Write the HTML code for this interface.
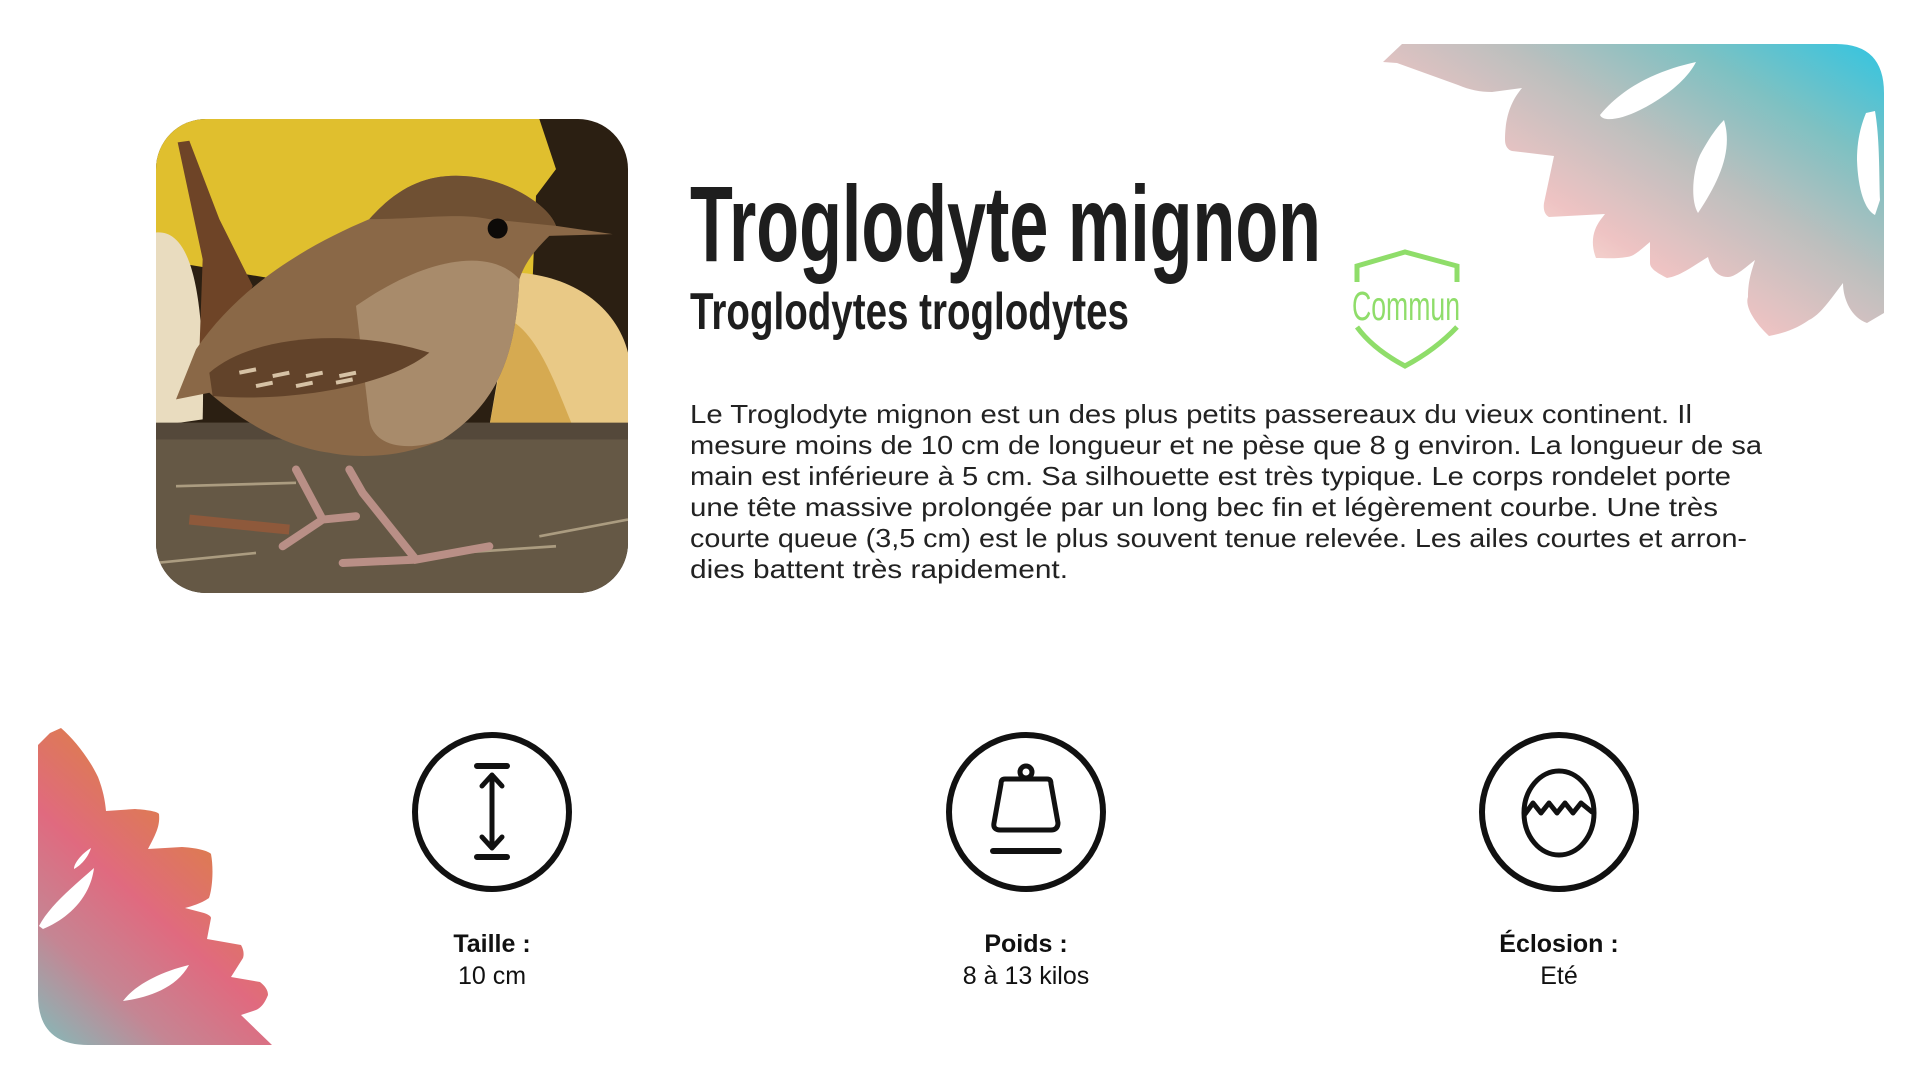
<!DOCTYPE html>
<html><head><meta charset="utf-8"><style>
html,body{margin:0;padding:0;background:#fff;width:1921px;height:1080px;overflow:hidden}
svg{position:absolute;left:0;top:0}
</style></head><body>
<svg width="1921" height="1080" viewBox="0 0 1921 1080" xmlns="http://www.w3.org/2000/svg">
<defs>
<linearGradient id="gtr" gradientUnits="userSpaceOnUse" x1="1620" y1="340" x2="1820" y2="20">
<stop offset="0" stop-color="#fde9dd"/><stop offset="0.22" stop-color="#eec3c3"/><stop offset="0.5" stop-color="#bcbfbe"/><stop offset="0.75" stop-color="#7fc1c2"/><stop offset="1" stop-color="#3cc4dd"/>
</linearGradient>
<linearGradient id="gbl" gradientUnits="userSpaceOnUse" x1="230" y1="830" x2="40" y2="1040">
<stop offset="0" stop-color="#dc8044"/><stop offset="0.4" stop-color="#e06a7f"/><stop offset="0.7" stop-color="#c58593"/><stop offset="1" stop-color="#85b9b8"/>
</linearGradient>
<clipPath id="pc"><rect x="156" y="119" width="472" height="474" rx="50"/></clipPath>
</defs>

<path fill="url(#gtr)" fill-rule="evenodd" d="M1402,44 L1836,44 Q1884,44 1884,93 L1884,313 L1867,323 C1852,318 1843,300 1843,283 C1830,300 1820,315 1809,320 C1795,330 1780,334 1769,336 C1752,320 1745,305 1748,297 C1748,280 1752,270 1755,260 C1745,268 1735,277 1728,277 C1715,277 1710,265 1708,257 C1690,268 1680,276 1667,278 C1655,272 1650,268 1650,263 L1650,242 C1640,250 1635,256 1627,257 C1615,259 1605,258 1596,258 C1592,248 1592,238 1595,230 C1598,222 1602,218 1605,214 L1549,217 C1545,215 1543,210 1544,203 L1554,156 L1512,151 C1508,150 1505,146 1505,140 C1505,115 1512,100 1522,88 L1492,92 C1480,92 1470,90 1458,85 L1397,63 L1383,62 Z
M1696,62 C1660,70 1625,85 1600,115 C1603,122 1620,120 1640,110 C1668,96 1688,78 1696,62 Z
M1724,120 C1733,150 1720,180 1698,213 C1690,200 1693,170 1700,155 C1708,140 1716,128 1724,120 Z
M1866,113 L1875,111 C1880,140 1879,180 1880,200 L1875,215 C1865,210 1858,190 1857,160 C1857,140 1861,125 1866,113 Z"/>

<path fill="url(#gbl)" fill-rule="evenodd" d="M38,745 L50,733 L61,728 C75,740 90,760 98,777 C103,790 105,800 106,811 L135,809 C150,810 158,812 159,814 C160,825 157,832 148,849 L182,847 C200,848 210,852 211,854 C214,870 212,890 209,898 C200,904 192,906 185,908 L204,913 C210,915 211,917 211,918 L207,939 L241,945 C244,950 244,955 243,958 L231,977 L260,982 C265,986 268,990 268,995 C264,1005 260,1008 256,1010 L241,1015 L272,1045 L88,1045 Q38,1045 38,995 Z
M91,848 C84,852 74,862 74,869 C80,866 88,858 91,848 Z
M94,868 C75,885 50,905 39,926 L43,929 C65,920 90,900 94,868 Z
M189,965 C160,972 135,985 123,1001 C145,998 175,990 189,965 Z"/>

<g clip-path="url(#pc)">
<svg x="156" y="119" width="472" height="474" viewBox="0 0 1416 1420" preserveAspectRatio="none">
<rect width="1416" height="1420" fill="#2b1f12"/>
<path d="M0,0 L1150,0 L1200,150 L1140,230 L1130,480 L600,520 L0,420 Z" fill="#e0bf2e"/>
<path d="M0,340 C100,330 150,500 140,900 L0,920 Z" fill="#e9dcbf"/>
<path d="M1080,460 C1250,470 1380,560 1416,700 L1416,920 L1000,920 Z" fill="#e9c986"/>
<path d="M1060,600 C1150,650 1200,800 1250,920 L1000,920 Z" fill="#c9962f" opacity="0.6"/>
<rect x="0" y="910" width="1416" height="510" fill="#655845"/>
<rect x="0" y="910" width="1416" height="50" fill="#54483a"/>
<path d="M60,1100 L420,1090 M1150,1250 L1416,1200 M0,1330 L300,1300 M900,1300 L1200,1280" stroke="#c9b99a" stroke-width="8" opacity="0.7"/>
<path d="M100,1200 L400,1230" stroke="#a05a38" stroke-width="30" opacity="0.7"/>
<path d="M65,70 L100,65 L190,300 L290,500 L240,620 L130,700 L140,420 Z" fill="#6e4427"/>
<path d="M120,690 C250,500 450,380 640,300 C720,210 800,170 900,170 C1050,170 1180,260 1200,320 L1370,345 L1180,350 C1150,380 1110,420 1090,480 C1080,700 1030,850 860,960 C750,1010 620,1020 520,1000 C380,980 250,900 160,820 L60,840 Z" fill="#8a6847"/>
<path d="M600,560 C800,420 1000,380 1090,480 C1080,700 1030,850 860,960 C750,1000 650,980 640,900 Z" fill="#a88b6b"/>
<path d="M640,300 C720,210 800,170 900,170 C1050,170 1180,260 1200,320 L1000,300 C900,280 800,300 640,300 Z" fill="#6f5033"/>
<path d="M160,760 C300,640 600,630 820,700 C700,800 400,850 170,830 Z" fill="#62432a"/>
<path d="M250,760 L300,750 M350,770 L400,760 M450,770 L500,760 M550,770 L600,760 M300,800 L350,790 M420,800 L470,790 M540,790 L590,780" stroke="#d6c2a5" stroke-width="12"/>
<circle cx="1025" cy="328" r="30" fill="#0d0a08"/>
<path d="M420,1050 L500,1200 L380,1280 M500,1200 L600,1190 M580,1050 L620,1120 L780,1320 L1000,1280 M780,1320 L560,1330" stroke="#b98f86" stroke-width="24" fill="none" stroke-linecap="round"/>
</svg>
</g>

<text x="690" y="261" font-family="Liberation Sans Narrow, Liberation Sans, sans-serif" font-weight="bold" font-size="108" fill="#1e1e1e" textLength="631" lengthAdjust="spacingAndGlyphs">Troglodyte mignon</text>
<text x="690" y="329" font-family="Liberation Sans Narrow, Liberation Sans, sans-serif" font-weight="bold" font-size="52" fill="#1e1e1e" textLength="439" lengthAdjust="spacingAndGlyphs">Troglodytes troglodytes</text>

<path d="M1357,282 L1357,266 L1405,252 L1457,266 L1457,282 M1357,327 C1370,345 1390,358 1405,366 C1420,358 1440,345 1457,327" fill="none" stroke="#8fdd6a" stroke-width="5"/>
<text x="1352" y="320" font-family="Liberation Sans Narrow, Liberation Sans, sans-serif" font-size="41" fill="#8fdd6a" textLength="108" lengthAdjust="spacingAndGlyphs">Commun</text>

<g font-family="Liberation Sans, sans-serif" font-size="26" fill="#222">
<text x="690" y="423" textLength="1002" lengthAdjust="spacingAndGlyphs">Le Troglodyte mignon est un des plus petits passereaux du vieux continent. Il</text>
<text x="690" y="454" textLength="1072" lengthAdjust="spacingAndGlyphs">mesure moins de 10 cm de longueur et ne pèse que 8 g environ. La longueur de sa</text>
<text x="690" y="485" textLength="1041" lengthAdjust="spacingAndGlyphs">main est inférieure à 5 cm. Sa silhouette est très typique. Le corps rondelet porte</text>
<text x="690" y="516" textLength="1028" lengthAdjust="spacingAndGlyphs">une tête massive prolongée par un long bec fin et légèrement courbe. Une très</text>
<text x="690" y="547" textLength="1057" lengthAdjust="spacingAndGlyphs">courte queue (3,5 cm) est le plus souvent tenue relevée. Les ailes courtes et arron-</text>
<text x="690" y="578" textLength="378" lengthAdjust="spacingAndGlyphs">dies battent très rapidement.</text>
</g>

<g fill="none" stroke="#111" stroke-width="6">
<circle cx="492" cy="812" r="77"/>
<circle cx="1026" cy="812" r="77"/>
<circle cx="1559" cy="812" r="77"/>
</g>
<g stroke="#111" stroke-width="5" fill="none" stroke-linecap="round" stroke-linejoin="round">
<path d="M477,766 L507,766 M477,857 L507,857" stroke-width="6"/>
<path d="M492,775 L492,848 M482,786 L492,775 L502,786 M482,837 L492,848 L502,837"/>
<circle cx="1026" cy="772" r="6"/>
<path d="M1005,779 L1047,779 C1050,779 1051,781 1051,784 L1058,823 C1058,828 1055,830 1051,830 L1000,830 C996,830 993,828 994,823 L1001,784 C1001,781 1002,779 1005,779 Z"/>
<path d="M993,851 L1059,851" stroke-width="6"/>
<ellipse cx="1559" cy="813" rx="35" ry="42"/>
<path d="M1525,814 L1533,803 L1541,813 L1549,803 L1557,813 L1565,803 L1573,813 L1581,803 L1592,812"/>
</g>

<g font-family="Liberation Sans, sans-serif" text-anchor="middle" fill="#111">
<text x="492" y="952" font-size="25" font-weight="bold">Taille :</text>
<text x="492" y="984" font-size="25">10 cm</text>
<text x="1026" y="952" font-size="25" font-weight="bold">Poids :</text>
<text x="1026" y="984" font-size="25">8 à 13 kilos</text>
<text x="1559" y="952" font-size="25" font-weight="bold">Éclosion :</text>
<text x="1559" y="984" font-size="25">Eté</text>
</g>
</svg>
</body></html>
